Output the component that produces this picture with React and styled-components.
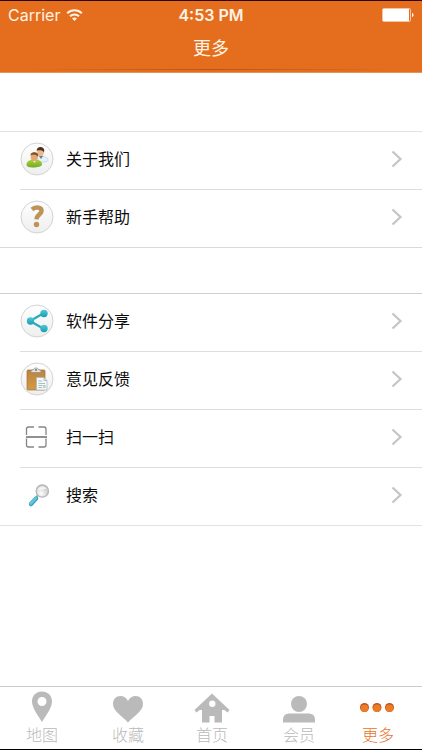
import React from "react";
import styled, { createGlobalStyle } from "styled-components";

const GlobalStyle = createGlobalStyle`
  *, *::before, *::after { box-sizing: border-box; }
  body {
    margin: 0;
    background: #fff;
    color: #0c0c0c;
    font-family: Inter, "Noto Sans CJK SC", sans-serif;
  }
`;

const Screen = styled.div`
  display: flex;
  flex-direction: column;
  min-height: 100vh;
  border-top: 1px solid #2a0606;
  border-bottom: 1px solid #000;
`;

const Header = styled.header`
  background: #e46e1d;
  color: #fff3e6;
  border-bottom: 1px solid #e39457;
`;

const StatusBar = styled.div`
  display: grid;
  grid-template-columns: 1fr auto 1fr;
  align-items: center;
  height: 28px;
  padding: 0 8px;
  font-size: 16px;
  line-height: 20px;
`;

const Carrier = styled.div`
  display: flex;
  align-items: center;
  gap: 6px;
`;

const Clock = styled.time`
  font-size: 16px;
  font-weight: 600;
`;

const BatteryIcon = styled.svg`
  justify-self: end;
`;

const Title = styled.h1`
  margin: 0;
  padding: 2px 0 5px;
  font-size: 18px;
  font-weight: 400;
  line-height: 36px;
  text-align: center;
`;

const HeaderRule = styled.div`
  height: 1px;
  margin: -3px 0 2px;
  background: linear-gradient(90deg, transparent 5%, #b9541a 50%, transparent 95%);
`;

const Content = styled.main`
  flex: 1;
  padding-top: 58px;
`;

const Group = styled.ul`
  list-style: none;
  margin: 0 0 45px;
  padding: 0;
  border-top: 1px solid ${(p) => p.$top};
  border-bottom: 1px solid ${(p) => p.$bottom};
`;

const Item = styled.li`
  padding-left: 20px;

  & + & > button {
    border-top: 1px solid #dedee0;
  }
`;

const RowButton = styled.button`
  display: flex;
  align-items: center;
  width: 100%;
  height: ${(p) => (p.$first ? 57 : 58)}px;
  padding: 0 19px 3px 0;
  border: 0;
  background: none;
  color: inherit;
  font: inherit;
  font-size: 16px;
  text-align: left;
  cursor: pointer;
`;

const RowIcon = styled.span`
  display: flex;
  flex: none;
  width: 34px;
  height: 34px;
  margin-right: 12px;
`;

const RowLabel = styled.span`
  flex: 1;
  line-height: 24px;
`;

const TabBar = styled.nav`
  display: grid;
  grid-template-columns: 84fr 88fr 80fr 94fr 64fr;
  height: 63px;
  padding-right: 12px;
  border-top: 1px solid #cbcbcb;
`;

const Tab = styled.a`
  display: flex;
  flex-direction: column;
  align-items: center;
  padding-top: 4px;
  color: ${(p) => (p.$active ? "#e8722a" : "#bababa")};
  font-size: 16px;
  font-weight: 300;
  line-height: 20px;
  text-decoration: none;
`;

const Wifi = () => (
  <svg width="17" height="13" viewBox="0 0 17 13" fill="none" stroke="currentColor" strokeWidth="2" aria-hidden="true">
    <path d="M1.2 4.3C5.2.3 11.8.3 15.8 4.3M4 7.300c2.500-2.500 6.500-2.500 9 0" />
    <path d="M8.500 12 6 9.500c1.400-1.400 3.600-1.400 5 0z" fill="currentColor" stroke="none" />
  </svg>
);

const Battery = () => (
  <BatteryIcon width="32" height="14" viewBox="0 0 32 14" role="img" aria-label="Battery">
    <rect x=".5" y=".5" width="28" height="13" rx="1.500" fill="none" stroke="#fff" strokeOpacity=".6" />
    <rect x="1" y="1" width="26" height="12" fill="#fff" />
    <path d="M30 5c2 .6 2 3.400 0 4z" fill="#fff" />
  </BatteryIcon>
);

const Chevron = () => (
  <svg width="12" height="18" viewBox="0 0 12 18" fill="none" stroke="#c5c5c9" strokeWidth="2.200" aria-hidden="true">
    <path d="m1.500 1.500 8 7.500-8 7.500" />
  </svg>
);

const Drawing = ({ children, ring }) => (
  <svg width="34" height="34" viewBox="0 0 34 34" fill="none" aria-hidden="true">
    <defs>
      <linearGradient id="disc" x2="0" y2="1"><stop stopColor="#fff" /><stop offset="1" stopColor="#eeeeef" /></linearGradient>
      <linearGradient id="green" x2="0" y2="1"><stop stopColor="#a9d43e" /><stop offset="1" stopColor="#72aa22" /></linearGradient>
      <linearGradient id="teal" x2="0" y2="1"><stop stopColor="#52c8d6" /><stop offset="1" stopColor="#169eb3" /></linearGradient>
      <linearGradient id="board" x2="0" y2="1"><stop stopColor="#bd8340" /><stop offset="1" stopColor="#d29a48" /></linearGradient>
      <radialGradient id="lens" cx=".4" cy=".7"><stop stopColor="#fff" /><stop offset="1" stopColor="#d2d2d5" /></radialGradient>
    </defs>
    {ring && <circle cx="17" cy="17" r="16" fill="url(#disc)" stroke="#d3d3d4" />}
    {children}
  </svg>
);

const People = () => (
  <Drawing ring>
    <path d="M15 19c0-4 3-5 5.500-5 4 0 7.500 1.500 7.500 4 0 2-4 2.500-8 2z" fill="#e6f0f6" stroke="#b5cad8" strokeWidth=".6" />
    <path d="m19 14 2 3 2-3z" fill="#4b7da5" />
    <ellipse cx="20.500" cy="9.800" rx="3.500" ry="4.500" fill="#edb98a" />
    <path d="M16.700 9c-.5-5 7.600-5.500 7.600-.3l-.6 1.500c-.8-2-2.500-2.200-6-2z" fill="#4b3122" />
    <path d="M6.500 23c0-4 3.500-5.500 8-5.500s7.500 1.800 7.500 5c0 3.500-15.500 4.300-15.500.5z" fill="url(#green)" />
    <path d="m12.500 18 2 3 2-3z" fill="#f1f5d5" />
    <ellipse cx="14.300" cy="14.800" rx="3.600" ry="4.500" fill="#e5a870" />
    <path d="M10.500 13.500c-.5-4 7.800-4.500 7.700 0l-.7 1c-.8-1.800-3-2-6.300-1.500z" fill="#80532a" />
  </Drawing>
);

const Question = () => (
  <Drawing ring>
    <path d="M12 9.500c4-3.500 10-2 9.500 1.800-.4 3.400-4.700 3.400-5 8" stroke="#bd9455" strokeWidth="4.500" />
    <circle cx="16.500" cy="24.500" r="2.700" fill="#bd9455" />
  </Drawing>
);

const Share = () => (
  <Drawing ring>
    <path d="M24 9 10 17l14 8" stroke="#27aabd" strokeWidth="2.200" />
    <circle cx="24" cy="9.500" r="3.700" fill="url(#teal)" />
    <circle cx="10.500" cy="17" r="3.700" fill="url(#teal)" />
    <circle cx="24" cy="24.500" r="3.700" fill="url(#teal)" />
  </Drawing>
);

const Clipboard = () => (
  <Drawing ring>
    <rect x="7" y="8" width="18" height="20" rx="1" fill="url(#board)" stroke="#a46d32" strokeWidth=".7" />
    <path d="M11 10.500V8.500l2.500-1c1-2 4-2 5 0l2.500 1v2z" fill="#e1e2e2" stroke="#8d8d8b" strokeWidth=".8" />
    <circle cx="16" cy="8" r="1" fill="#85755b" />
    <path d="M16.500 15.500H24l3 3V28H16.500z" fill="#f3f7f7" stroke="#a6b8bc" strokeWidth=".7" />
    <path d="M24 15.500v3h3M18.500 19H22M18.500 21.500h6.500M18.500 23.500h4M18.500 25.500H22" stroke="#9aafb5" strokeWidth=".8" />
    <path d="M23 23h2.500v3H23z" fill="#b6d2c0" />
  </Drawing>
);

const Scan = () => (
  <Drawing>
    <path
      d="M6.500 15V9a2 2 0 0 1 2-2H14M18.500 7H24a2 2 0 0 1 2 2v6M6.500 18.500V25a2 2 0 0 0 2 2H14M18.500 27H24a2 2 0 0 0 2-2v-6.500"
      stroke="#858585"
      strokeWidth="1.300"
    />
    <path d="M6 17h21" stroke="#858585" strokeWidth="1.800" />
  </Drawing>
);

const Magnifier = () => (
  <Drawing>
    <path d="m16.500 19 2.500-3" stroke="#a9b1b5" strokeWidth="2" />
    <path d="m11 26 5-5.500" stroke="#3c9dbb" strokeWidth="4.400" strokeLinecap="round" />
    <path d="m10.700 25.500 4.800-5.200" stroke="#62c4de" strokeWidth="3" strokeLinecap="round" />
    <circle cx="22.300" cy="13" r="6.200" fill="url(#lens)" stroke="#b4b4b7" strokeWidth="1.200" />
    <path d="M18 11.800c1-4 7-4.500 8.500-.5-3-1-5 1.500-8.500.5z" fill="#fff" fillOpacity=".7" />
  </Drawing>
);

const TabDrawing = ({ children }) => (
  <svg width="36" height="34" viewBox="0 0 36 34" fill="currentColor" aria-hidden="true">
    {children}
  </svg>
);

const Pin = () => (
  <TabDrawing>
    <path fillRule="evenodd" d="M18 .5c6 0 10 4.200 10 10 0 6-5 12.500-10 20.500C13 23 8 16.500 8 10.500 8 4.700 12 .5 18 .5zm0 5.500a4.500 4.500 0 1 0 0 9 4.500 4.500 0 0 0 0-9z" />
  </TabDrawing>
);

const Heart = () => (
  <TabDrawing>
    <path d="M18 10C16.500 6.500 13.500 5 10.500 5 6 5 3 8.500 3 13c0 7 8 11 15 18.500C25 24 33 20 33 13c0-4.500-3-8-7.500-8-3 0-6 1.500-7.500 5z" />
  </TabDrawing>
);

const Home = () => (
  <TabDrawing>
    <path fillRule="evenodd" d="M18 2.500 35.500 19l-2 2.500-3-2.500h-2.500v12.500h-7.500V25h-5v6.500H8V19H5.500l-3 2.500-2-2.500zm.3 7a3.200 3.200 0 1 0 0 6.400 3.200 3.200 0 0 0 0-6.400z" />
  </TabDrawing>
);

const Person = () => (
  <TabDrawing>
    <circle cx="18" cy="13" r="8" />
    <path d="M2 31.500v-2.500c0-4.500 2.500-6.500 7-6.500h18c4.500 0 7 2 7 6.500v2.500z" />
  </TabDrawing>
);

const Dots = () => (
  <TabDrawing>
    <g fill="#b9561c">
      <circle cx="4.500" cy="16.500" r="4.500" />
      <circle cx="17" cy="16.500" r="4.500" />
      <circle cx="29.500" cy="16.500" r="4.500" />
    </g>
    <g fill="#f07b25">
      <circle cx="4.500" cy="17.300" r="3.800" />
      <circle cx="17" cy="17.300" r="3.800" />
      <circle cx="29.500" cy="17.300" r="3.800" />
    </g>
  </TabDrawing>
);

const groups = [
  {
    top: "#e2e2e3",
    bottom: "#d9d9da",
    rows: [
      { label: "关于我们", Icon: People },
      { label: "新手帮助", Icon: Question },
    ],
  },
  {
    top: "#d0d0d2",
    bottom: "#e2e2e3",
    rows: [
      { label: "软件分享", Icon: Share },
      { label: "意见反馈", Icon: Clipboard },
      { label: "扫一扫", Icon: Scan },
      { label: "搜索", Icon: Magnifier },
    ],
  },
];

const tabs = [
  { label: "地图", href: "#map", Icon: Pin },
  { label: "收藏", href: "#favorites", Icon: Heart },
  { label: "首页", href: "#home", Icon: Home },
  { label: "会员", href: "#member", Icon: Person },
  { label: "更多", href: "#more", Icon: Dots, active: true },
];

export default function App() {
  return (
    <Screen>
      <GlobalStyle />
      <Header>
        <StatusBar>
          <Carrier>
            Carrier
            <Wifi />
          </Carrier>
          <Clock>4:53 PM</Clock>
          <Battery />
        </StatusBar>
        <Title>更多</Title>
        <HeaderRule />
      </Header>
      <Content>
        {groups.map((group) => (
          <Group key={group.rows[0].label} $top={group.top} $bottom={group.bottom}>
            {group.rows.map(({ label, Icon }, i) => (
              <Item key={label}>
                <RowButton type="button" $first={i === 0}>
                  <RowIcon>
                    <Icon />
                  </RowIcon>
                  <RowLabel>{label}</RowLabel>
                  <Chevron />
                </RowButton>
              </Item>
            ))}
          </Group>
        ))}
      </Content>
      <TabBar>
        {tabs.map(({ label, href, Icon, active }) => (
          <Tab key={label} href={href} $active={active} aria-current={active ? "page" : undefined}>
            <Icon />
            {label}
          </Tab>
        ))}
      </TabBar>
    </Screen>
  );
}
